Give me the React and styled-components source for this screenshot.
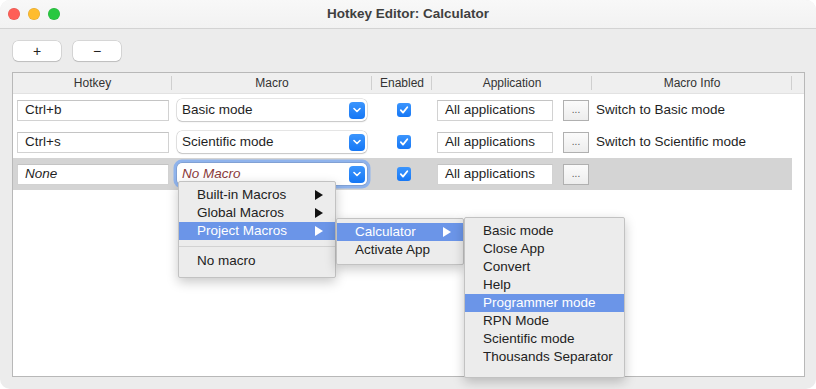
import React from "react"
import styled, { createGlobalStyle, css } from "styled-components"

const GlobalStyle = createGlobalStyle`
  html, body {
    margin: 0;
    padding: 0;
    background: #ffffff;
  }
  body {
    font-family: "Liberation Sans", Arial, sans-serif;
    font-size: 13.5px;
    color: #222;
  }
`

const Window = styled.div`
  position: relative;
  width: 816px;
  height: 389px;
  border-radius: 10px;
  overflow: hidden;
  background: #ececec;
  display: flex;
  flex-direction: column;
  box-sizing: border-box;
`

const TitleBar = styled.div`
  height: 28px;
  flex: none;
  display: grid;
  grid-template-columns: 1fr auto 1fr;
  align-items: center;
  background: linear-gradient(#f8f8f8, #f2f2f2);
  border-bottom: 1px solid #d3d3d3;
  padding: 0 8px;
`

const Lights = styled.div`
  display: flex;
  gap: 8px;
`

const Light = styled.span`
  width: 12px;
  height: 12px;
  border-radius: 50%;
  background: ${p => p.$color};
  box-shadow: inset 0 0 0 0.5px rgba(0, 0, 0, 0.12);
`

const Title = styled.div`
  font-weight: bold;
  font-size: 13.5px;
  color: #3f3f3f;
  padding-bottom: 1px;
`

const Body = styled.div`
  flex: 1;
  display: flex;
  flex-direction: column;
  padding: 12px 11px 12px 12px;
  gap: 11px;
  min-height: 0;
`

const Toolbar = styled.div`
  display: flex;
  gap: 12px;
  padding-left: 1px;
`

const PushButton = styled.button`
  width: 48px;
  height: 20px;
  border: none;
  border-radius: 5px;
  background: #ffffff;
  box-shadow: 0 0 0 0.5px rgba(0, 0, 0, 0.18), 0 1px 1px rgba(0, 0, 0, 0.12);
  font-family: "Liberation Sans", Arial, sans-serif;
  font-size: 14px;
  color: #222;
  padding: 0;
  line-height: 20px;
`

const Table = styled.div`
  flex: 1;
  background: #ffffff;
  border: 1px solid #b8b8b8;
  display: flex;
  flex-direction: column;
`

const columns = "159px 200px 60px 160px 200px 1fr"

const HeaderRow = styled.div`
  display: grid;
  grid-template-columns: ${columns};
  height: 20px;
  background: #efefef;
  border-bottom: 1px solid #e2e2e2;
`

const HeaderCell = styled.div`
  position: relative;
  display: flex;
  align-items: center;
  justify-content: center;
  font-size: 12px;
  color: #333;
  &::after {
    content: "";
    position: absolute;
    right: 0;
    top: 3px;
    bottom: 3px;
    width: 1px;
    background: #cfcfcf;
  }
`

const Row = styled.div`
  display: grid;
  grid-template-columns: ${columns};
  height: 32px;
  align-items: center;
  ${p =>
    p.$selected &&
    css`
      background: linear-gradient(to right, #d4d4d4 779px, #ffffff 779px);
    `}
`

const Cell = styled.div`
  display: flex;
  align-items: center;
  padding-left: ${p => p.$pad || 0}px;
  justify-content: ${p => (p.$center ? "center" : "flex-start")};
  gap: 10px;
`

const TextField = styled.div`
  box-sizing: border-box;
  width: ${p => p.$width}px;
  height: 21px;
  background: #ffffff;
  border: 1px solid #d2d2d2;
  border-top-color: #c4c4c4;
  padding: 0 0 1px 7px;
  display: flex;
  align-items: center;
  font-size: 13.5px;
  color: #1f1f1f;
  font-style: ${p => (p.$italic ? "italic" : "normal")};
`

const Select = styled.div`
  box-sizing: border-box;
  width: 190px;
  height: 22px;
  border-radius: 5px;
  background: #ffffff;
  box-shadow: 0 0 0 0.5px rgba(0, 0, 0, 0.2), 0 1px 1.5px rgba(0, 0, 0, 0.15);
  display: flex;
  align-items: center;
  justify-content: space-between;
  padding: 0 2px 1px 5px;
  font-size: 13.5px;
  color: ${p => (p.$placeholder ? "#8a3b3b" : "#1f1f1f")};
  font-style: ${p => (p.$placeholder ? "italic" : "normal")};
  ${p =>
    p.$focused &&
    css`
      box-shadow: 0 0 0 0.5px rgba(0, 0, 0, 0.2), 0 0 0 3.5px #8fb3ec;
    `}
`

const Chevron = styled.span`
  width: 16px;
  height: 17px;
  margin-top: 1px;
  border-radius: 4px;
  background: linear-gradient(#3b95fd, #1677f5);
  display: flex;
  align-items: center;
  justify-content: center;
`

const Check = styled.span`
  width: 14px;
  height: 14px;
  border-radius: 3px;
  background: linear-gradient(#3b95fd, #1677f5);
  display: flex;
  align-items: center;
  justify-content: center;
  margin-left: 4px;
`

const DotsButton = styled.div`
  box-sizing: border-box;
  width: 26px;
  height: 21px;
  border: 1px solid #b0b0b0;
  background: linear-gradient(#fbfbfb, #ededed);
  display: flex;
  align-items: center;
  justify-content: center;
  font-size: 10px;
  color: #555;
  padding-bottom: 2px;
`

const Info = styled.div`
  font-size: 13.5px;
  color: #1f1f1f;
  padding: 0 0 2px 4px;
  white-space: nowrap;
`

const Menu = styled.div`
  position: absolute;
  left: ${p => p.$left}px;
  top: ${p => p.$top}px;
  width: ${p => p.$width}px;
  box-sizing: border-box;
  padding: ${p => p.$padTop}px 0 ${p => p.$padBottom}px;
  background: #ececec;
  border: 0.5px solid #c2c2c2;
  border-radius: 2px;
  box-shadow: 0 4px 12px rgba(0, 0, 0, 0.22);
  display: flex;
  flex-direction: column;
  z-index: ${p => p.$z || 1};
`

const MenuItem = styled.div`
  height: 18px;
  display: flex;
  align-items: center;
  justify-content: space-between;
  padding: 0 12px 1px 18px;
  box-sizing: border-box;
  font-size: 13.5px;
  color: ${p => (p.$active ? "#ffffff" : "#222")};
  background: ${p => (p.$active ? "#6b95e8" : "transparent")};
  white-space: nowrap;
`

const Arrow = styled.span`
  width: 0;
  height: 0;
  border-top: 5px solid transparent;
  border-bottom: 5px solid transparent;
  border-left: 8px solid ${p => (p.$active ? "#ffffff" : "#111")};
`

const Separator = styled.div`
  height: 12px;
  display: flex;
  align-items: center;
  &::before {
    content: "";
    flex: 1;
    height: 1px;
    background: #d2d2d2;
  }
`

const ChevronIcon = () => (
  <svg width="8" height="6" viewBox="0 0 8 6">
    <path d="M1 1.5 L4 4.5 L7 1.5" fill="none" stroke="#fff" strokeWidth="1.6" strokeLinecap="round" strokeLinejoin="round" />
  </svg>
)

const CheckIcon = () => (
  <svg width="10" height="10" viewBox="0 0 10 10">
    <path d="M1.8 5.2 L4 7.6 L8.3 2.2" fill="none" stroke="#fff" strokeWidth="1.8" strokeLinecap="round" strokeLinejoin="round" />
  </svg>
)

const rows = [
  { key: "Ctrl+b", macro: "Basic mode", info: "Switch to Basic mode" },
  { key: "Ctrl+s", macro: "Scientific mode", info: "Switch to Scientific mode" },
  { key: "None", macro: "No Macro", info: "", empty: true },
]

const calculatorMacros = [
  "Basic mode",
  "Close App",
  "Convert",
  "Help",
  "Programmer mode",
  "RPN Mode",
  "Scientific mode",
  "Thousands Separator",
]

export default function App() {
  return (
    <>
      <GlobalStyle />
      <Window>
        <TitleBar>
          <Lights>
            <Light $color="#fe5f57" />
            <Light $color="#febc2e" />
            <Light $color="#28c840" />
          </Lights>
          <Title>Hotkey Editor: Calculator</Title>
          <div />
        </TitleBar>
        <Body>
          <Toolbar>
            <PushButton>+</PushButton>
            <PushButton>−</PushButton>
          </Toolbar>
          <Table>
            <HeaderRow>
              <HeaderCell>Hotkey</HeaderCell>
              <HeaderCell>Macro</HeaderCell>
              <HeaderCell>Enabled</HeaderCell>
              <HeaderCell>Application</HeaderCell>
              <HeaderCell>Macro Info</HeaderCell>
              <div />
            </HeaderRow>
            {rows.map(r => (
              <Row key={r.key} $selected={r.empty}>
                <Cell $pad={4}>
                  <TextField $width={152} $italic={r.empty}>{r.key}</TextField>
                </Cell>
                <Cell $pad={5}>
                  <Select $placeholder={r.empty} $focused={r.empty}>
                    {r.macro}
                    <Chevron>
                      <ChevronIcon />
                    </Chevron>
                  </Select>
                </Cell>
                <Cell $center>
                  <Check>
                    <CheckIcon />
                  </Check>
                </Cell>
                <Cell $pad={5}>
                  <TextField $width={116}>All applications</TextField>
                  <DotsButton>...</DotsButton>
                </Cell>
                <Cell>
                  <Info>{r.info}</Info>
                </Cell>
                <div />
              </Row>
            ))}
          </Table>
        </Body>

        <Menu $left={178} $top={181} $width={158} $padTop={4} $padBottom={7}>
          <MenuItem>
            Built-in Macros <Arrow />
          </MenuItem>
          <MenuItem>
            Global Macros <Arrow />
          </MenuItem>
          <MenuItem $active>
            Project Macros <Arrow $active />
          </MenuItem>
          <Separator />
          <MenuItem>No macro</MenuItem>
        </Menu>

        <Menu $left={336} $top={218} $width={128} $padTop={4} $padBottom={5} $z={2}>
          <MenuItem $active>
            Calculator <Arrow $active />
          </MenuItem>
          <MenuItem>Activate App</MenuItem>
        </Menu>

        <Menu $left={464} $top={217} $width={161} $padTop={4} $padBottom={11} $z={3}>
          {calculatorMacros.map(m => (
            <MenuItem key={m} $active={m === "Programmer mode"}>
              {m}
            </MenuItem>
          ))}
        </Menu>
      </Window>
    </>
  )
}
